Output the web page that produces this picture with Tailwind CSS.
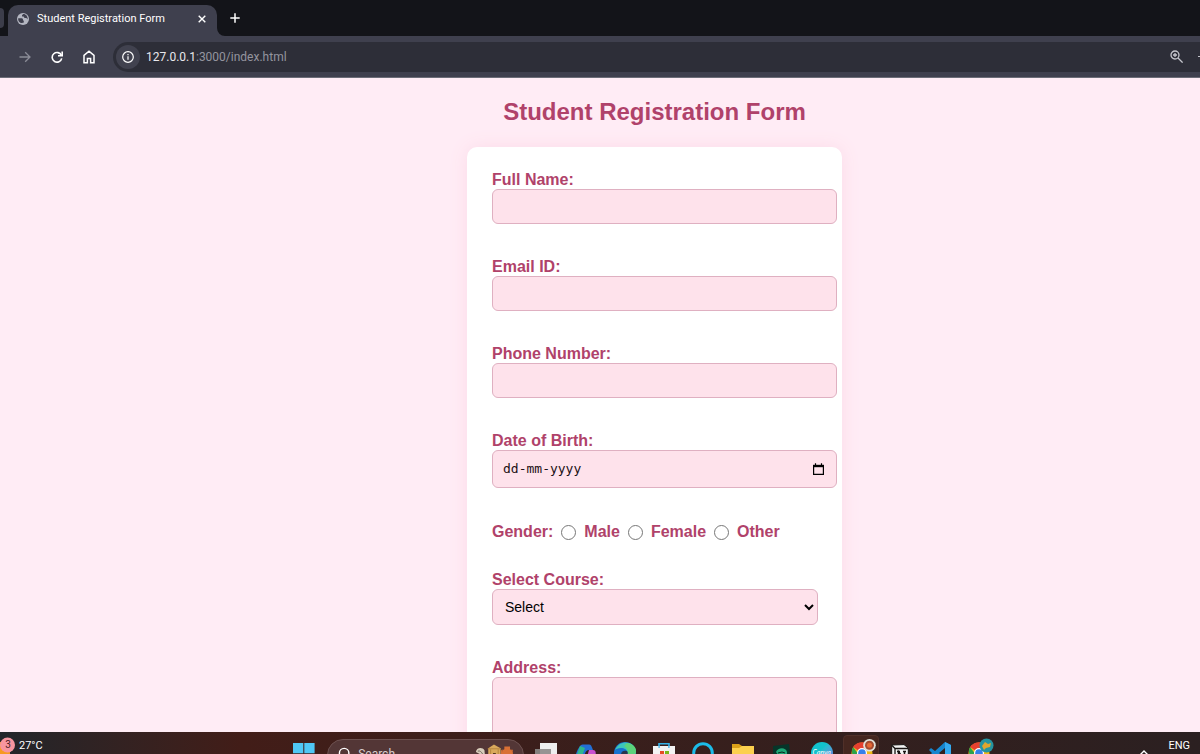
<!DOCTYPE html>
<html lang="en">
<head>
  <meta charset="UTF-8">
  <meta name="viewport" content="width=device-width, initial-scale=1.0">
  <title>Student Registration Form</title>
  <script src="https://cdn.jsdelivr.net/npm/@tailwindcss/browser@4"></script>
</head>
<body class="h-screen flex flex-col overflow-hidden bg-[#ffecf5] font-[Roboto,'Noto_Sans',sans-serif]">

  <!-- Tab strip -->
  <header class="shrink-0">
    <div class="h-9 flex bg-[#131419]">
      <div class="w-2 h-9 pt-2 pr-1">
        <div class="h-5 bg-[#3c3d4a] rounded-r-md"></div>
      </div>
      <div class="w-[209px] mt-[5px] pb-1 pl-[9px] pr-[7px] flex items-center gap-2 bg-[#3f404e] rounded-t-[10px] text-white">
        <svg class="size-3 shrink-0" viewBox="0 0 12 12" aria-hidden="true">
          <circle cx="6" cy="6" r="6" fill="#b4b6c1"/>
          <path d="M1.2 5.2h3.3c1 0 1.5.7 1.5 1.6 0 .7.8.6.8 1.4v1.4c-3 1.4-6-.8-5.6-4.4zM6.2 1.1 5 2.3v1.2h1.6l.9 1.6h1.9l1.2 1.3C11 3.5 8.8.9 6.2 1.1z" fill="#3f404e"/>
        </svg>
        <span class="flex-1 text-[11px] leading-4 whitespace-nowrap">Student Registration Form</span>
        <button aria-label="Close tab" class="size-4 grid place-items-center">
          <svg class="size-2" viewBox="0 0 8 8" stroke="#fff" stroke-width="1.4"><path d="M.7.7l6.6 6.6M7.3.7.7 7.3"/></svg>
        </button>
      </div>
      <div class="flex items-end">
        <svg class="size-2" viewBox="0 0 8 8"><path d="M0 0v8h8A8 8 0 0 1 0 0z" fill="#3f404e"/></svg>
      </div>
      <button aria-label="New tab" class="w-5 h-9 grid place-items-center">
        <svg class="size-[10px]" viewBox="0 0 10 10" stroke="#fff" stroke-width="1.5"><path d="M5 .3v9.4M.3 5h9.4"/></svg>
      </button>
    </div>

    <!-- Toolbar -->
    <div class="h-[42px] pl-[17px] flex items-center bg-[#3f404e] border-b border-[#6c6d78]">
      <nav class="flex gap-4">
        <button aria-label="Forward" class="size-4 grid place-items-center">
          <svg class="w-3 h-3" viewBox="0 0 12 12" fill="none" stroke="#8b8c97" stroke-width="1.3"><path d="M.5 6h10.5M6.2 1.2 11 6l-4.8 4.8"/></svg>
        </button>
        <button aria-label="Reload" class="size-4 grid place-items-center">
          <svg class="size-3" viewBox="0 0 12 12" fill="none" stroke="#fff" stroke-width="1.6"><path d="M10.4 4.4A4.8 4.8 0 1 0 10.7 7.3"/><path d="M7 4.8h4.2V.6"/></svg>
        </button>
        <button aria-label="Home" class="size-4 grid place-items-center">
          <svg class="w-3 h-[14px]" viewBox="0 0 12 14" fill="none" stroke="#fff" stroke-width="1.5"><path d="M1 5.3 6 1.2l5 4.1v7.5H7.6V8.5H4.4v4.3H1z"/></svg>
        </button>
      </nav>
      <div class="flex-1 h-[30px] ml-4 pl-[3px] flex items-center bg-[#2d2e38] rounded-l-full">
        <button aria-label="View site information" class="size-6 grid place-items-center rounded-full bg-[#41424f]">
          <svg class="size-3" viewBox="0 0 12 12" fill="none" stroke="#fff" stroke-width="1.2"><circle cx="6" cy="6" r="5.3"/><path d="M6 5.2v3.6M6 3v1.3"/></svg>
        </button>
        <p class="ml-[6px] flex-1 text-xs leading-5 text-[#94959f]"><span class="text-[#e8e8ec]">127.0.0.1</span>:3000/index.html</p>
        <button aria-label="Zoom" class="size-4 grid place-items-center">
          <svg class="size-[13px]" viewBox="0 0 13 13" fill="none" stroke="#c5c6cd" stroke-width="1.3"><circle cx="5" cy="5" r="4"/><path d="m8 8 4.6 4.6M5 3v4M3 5h4"/></svg>
        </button>
        <span class="w-[2px] h-px ml-[14px] bg-[#c5c6cd]"></span>
      </div>
    </div>
  </header>

  <!-- Page -->
  <main class="flex-1 min-h-0 overflow-hidden pl-[109px] pt-[18px] font-['Liberation_Sans',Arial,sans-serif] text-[#b0426a]">
    <h1 class="text-center text-2xl leading-8 font-bold mb-[19px]">Student Registration Form</h1>
    <form class="w-[375px] mx-auto p-6 pl-[25px] bg-white rounded-[10px] shadow-[0_0_18px_#fbdbe8] font-bold text-base leading-[18px]">
      <div class="mb-[34px]">
        <label for="name" class="block">Full Name:</label>
        <input id="name" type="text" class="block w-[345px] h-[35px] px-2 bg-[#fee2eb] border border-[#dfb0c1] rounded-md">
      </div>
      <div class="mb-[34px]">
        <label for="email" class="block">Email ID:</label>
        <input id="email" type="email" class="block w-[345px] h-[35px] px-2 bg-[#fee2eb] border border-[#dfb0c1] rounded-md">
      </div>
      <div class="mb-[34px]">
        <label for="phone" class="block">Phone Number:</label>
        <input id="phone" type="tel" class="block w-[345px] h-[35px] px-2 bg-[#fee2eb] border border-[#dfb0c1] rounded-md">
      </div>
      <div class="mb-[35px]">
        <label for="dob" class="block">Date of Birth:</label>
        <div class="flex items-center w-[345px] h-[38px] pl-[10px] pr-3 bg-[#fee2eb] border border-[#dfb0c1] rounded-md">
          <input id="dob" type="text" placeholder="dd-mm-yyyy" class="flex-1 font-['DejaVu_Sans_Mono',monospace] font-normal text-[13px] text-black placeholder:text-[#1c1015]">
          <button type="button" aria-label="Show date picker">
            <svg class="w-[11px] h-3" viewBox="0 0 11 12" fill="none" stroke="#000"><path d="M.6 2v9.4h9.8V2" stroke-width="1.2"/><path d="M0 3h11" stroke-width="2.4"/><path d="M2.5.3v2M8.5.3v2" stroke-width="1.2"/></svg>
          </button>
        </div>
      </div>
      <fieldset class="mb-[30px] flex items-center">
        <span class="mr-2">Gender:</span>
        <input id="male" type="radio" name="gender" class="size-[15px] mr-2"><label for="male" class="mr-2">Male</label>
        <input id="female" type="radio" name="gender" class="size-[15px] mr-2"><label for="female" class="mr-2">Female</label>
        <input id="other" type="radio" name="gender" class="size-[15px] mr-2"><label for="other">Other</label>
      </fieldset>
      <div class="mb-[34px]">
        <label for="course" class="block">Select Course:</label>
        <select id="course" class="block w-full h-9 px-2 bg-[#fee2eb] border border-[#dfb0c1] rounded-md font-normal text-sm text-black">
          <option>Select</option>
        </select>
      </div>
      <div>
        <label for="address" class="block">Address:</label>
        <textarea id="address" rows="4" class="block w-[345px] h-20 p-2 bg-[#fee2eb] border border-[#dfb0c1] rounded-md resize-none"></textarea>
      </div>
    </form>
  </main>

  <!-- Taskbar -->
  <footer class="shrink-0 h-[22px] overflow-hidden flex items-start bg-linear-to-r from-[#22252a] via-[#421d18] via-20% to-[#2b2021] text-white">
    <div class="w-[293px] flex items-start">
      <svg class="w-4 h-[22px]" viewBox="0 0 16 22" aria-hidden="true"><path d="M0 10h10v12H0z" fill="#f79a22"/><circle cx="7.5" cy="13" r="7.5" fill="#f6959f"/></svg>
      <span class="w-4 -ml-4 pt-[5px] text-center text-[10px] leading-4 text-[#4a1c24]">3</span>
      <span class="ml-[3px] pt-[6px] text-[11px] leading-4">27°C</span>
    </div>
    <button aria-label="Start" class="pt-[11px]">
      <svg class="w-[22px] h-[22px]" viewBox="0 0 22 22"><path d="M0 0h10.3v10.3H0zM11.3 0h10.3v10.3H11.3zM0 11.3h10.3V22H0zM11.3 11.3h10.3V22H11.3z" fill="#4fc7f5"/></svg>
    </button>
    <div class="w-[197px] h-8 mt-[7px] ml-3 px-[10px] pt-1 flex items-start bg-[#533636] border border-[#6d5150] rounded-full">
      <svg class="size-4 mt-[3px]" viewBox="0 0 16 16" fill="none" stroke="#fff" stroke-width="1.5"><circle cx="6.5" cy="6" r="5"/><path d="m10 10 5 5"/></svg>
      <input type="text" aria-label="Search" placeholder="Search" class="w-[117px] ml-[5px] text-xs leading-5 placeholder:text-[#d8cdcd]">
      <svg class="w-10 h-5" viewBox="0 0 40 20" aria-hidden="true">
        <path d="M1 8c0-5 7-6 9-2l1 12H8L7 11z" fill="#d9cdbb"/><path d="M3 7c2-1 4 1 5 3" stroke="#6d6258" fill="none"/>
        <path d="M14 4 20 0l7 4v14H14z" fill="#d9a95c"/><path d="M13.5 4.5h14M16.5 5v12M24.5 5v12" stroke="#b5843e"/><path d="M19 9h3v9h-3z" fill="#4e331b"/>
        <path d="M31 2h6v3c4 2 4 7 0 12h-6c-4-5-4-10 0-12z" fill="#d97035"/><path d="M30 6h-2v4M38 6h2v4" stroke="#d97035" fill="none"/>
      </svg>
    </div>
    <nav class="w-[473px] ml-[2px] grid grid-cols-12 justify-items-center items-start">
      <button aria-label="Task view" class="pt-[11px]"><svg class="size-[22px]" viewBox="0 0 22 22"><path d="M5 0h17v16H5z" fill="#eee"/><path d="M0 6h16v14H0z" fill="#8d8988" fill-opacity=".9"/></svg></button>
      <button aria-label="Copilot" class="pt-3"><svg class="size-[22px]" viewBox="0 0 22 22"><path d="M6 2C7 .8 8 .5 10 .5h5c2 0 2.500 1.500 3 3L19 6h-4c-3 0-4 3-5 7l-2 7H1C0 13 3 6 6 2z" fill="#236fd6"/><path d="M6 2 2 13l5 2L11 4z" fill="#2eb58e"/><path d="M15 6h4c3 0 3 3 2.500 6L19 20h-8z" fill="#c850cf"/></svg></button>
      <button aria-label="Edge" class="pt-[10px]"><svg class="size-[22px]" viewBox="0 0 22 22"><circle cx="11" cy="11" r="11" fill="#1672d0"/><path d="M1 8C5-2 20-2 22 9c0 4-3 6-6 6-2 0-3-1-3-2 2-4-2-7-6-7-3 0-5 1-6 2z" fill="#3cc5ba"/><path d="M13 1c6 1 9 4 9 8 0 4-3 6-6 6-2 0-3-1-3-2 2-4 0-7-3-9z" fill="#5bd37a"/><path d="M7 13c0-4 3-5 6-4 1 1 1 3 0 4 0 1 1 2 3 2-4 4-9 2-9-2z" fill="#28364d"/></svg></button>
      <button aria-label="Store" class="pt-[10px]"><svg class="size-[22px]" viewBox="0 0 22 22"><path d="M6 6V1.7h10V6" fill="none" stroke="#36b2e8" stroke-width="1.6"/><path d="M0 4h22v17H0z" fill="#f3f3f3"/><path d="M5.5 4h1.2v2H5.5zM15.3 4h1.2v2h-1.2z" fill="#36b2e8"/><path d="M7 9h4v4H7z" fill="#e64a25"/><path d="M12 9h4v4h-4z" fill="#79b81a"/></svg></button>
      <button aria-label="Assistant" class="pt-[10px]"><svg class="size-[22px]" viewBox="0 0 22 22"><circle cx="11" cy="11" r="9.3" fill="none" stroke="#1cbce9" stroke-width="3"/></svg></button>
      <button aria-label="File Explorer" class="pt-3"><svg class="size-[22px]" viewBox="0 0 22 22"><path d="M0 0h7l3 2h12v5H0z" fill="#dba019"/><path d="M0 4h7l3-2h12v18H0z" fill="#fcd04e"/></svg></button>
      <button aria-label="Green app" class="pt-3"><svg class="size-[18px]" viewBox="0 0 18 18"><path d="M0 2 16 0l2 18H0z" fill="#063529"/><path d="M3 8c2-5 10-5 11 0v6h-3l1-3-3 1-2 4-2-5z" fill="#1fa675"/><path d="m5 9 4-1 3 1" stroke="#06271e" fill="none"/></svg></button>
      <button aria-label="Canva" class="pt-[10px]">
        <span class="size-[22px] pt-[6px] block rounded-full overflow-hidden bg-linear-to-br from-[#12c2cc] from-40% to-[#6465e5] font-[Lato,sans-serif] italic text-[7px] leading-[8px] text-white text-center">Canva</span>
      </button>
      <button aria-label="Chrome" class="w-9 h-8 mt-[3px] pt-[3px] pl-[7px] flex items-start bg-[#45261f] border border-[#503029] rounded-sm">
        <svg class="w-[26px] h-[24px]" viewBox="0 0 26 24"><circle cx="11" cy="14" r="10.5" fill="#efb916"/><path d="M11 14 2 8C6 2 16 1 20 9z" fill="#e7402f"/><path d="M2 8c-3 6 1 15 9 15.500L8 16z" fill="#2ba24c"/><circle cx="11" cy="14" r="5" fill="#fff"/><circle cx="11" cy="14" r="3.8" fill="#3680ea"/><circle cx="18.5" cy="6.3" r="6.3" fill="#e1e2da"/><circle cx="18.5" cy="6.3" r="4.5" fill="#a44b30"/><circle cx="18.5" cy="6.3" r="2.5" fill="#e66835"/></svg>
      </button>
      <button aria-label="Notion" class="pt-3"><svg class="w-[18px] h-5" viewBox="0 0 18 20"><path d="M.7 1 13 .6 17.300 4v15H4L.7 15z" fill="#f4f4f4" stroke="#171312"/><path d="M1 1.500 4 4.500h13M4 4.500V19" fill="none" stroke="#171312" stroke-width="1.3"/><path d="M7.500 16V7.500l6 8.500V7.500M6 7.500h3M12 7.500h3" fill="none" stroke="#171312" stroke-width="1.5"/></svg></button>
      <button aria-label="VS Code" class="pt-[10px]"><svg class="size-[22px]" viewBox="0 0 22 22"><path d="m16 0 6 3v16l-6 3L6 13l-4 3-2-2 3-3-3-3 2-2 4 3zm0 6-6 5 6 5z" fill="#1686cf"/><path d="m16 0 6 3v16l-6 3z" fill="#35aaf0"/></svg></button>
      <button aria-label="Chrome profile" class="pt-[6px] pl-1">
        <svg class="w-[26px] h-[24px]" viewBox="0 0 26 24"><circle cx="11" cy="15" r="10.5" fill="#efb916"/><path d="M11 15 2 9C6 3 16 2 20 10z" fill="#e7402f"/><path d="M2 9c-3 6 1 14 9 14.500L8 17z" fill="#2ba24c"/><circle cx="11" cy="15" r="5" fill="#fff"/><circle cx="11" cy="15" r="3.8" fill="#3680ea"/><circle cx="18.5" cy="7.5" r="7" fill="#2494a0"/><path d="m14 8 3-4 3 2 3-1-1 4-4 1-2 2z" fill="#e0a52c"/></svg>
      </button>
    </nav>
    <div class="ml-auto pr-[10px] flex items-start gap-5">
      <button aria-label="Show hidden icons" class="pt-[18px]"><svg class="w-2 h-[5px]" viewBox="0 0 8 5" fill="none" stroke="#fff" stroke-width="1.4"><path d="m.5 4.5 3.5-3.5 3.5 3.5"/></svg></button>
      <span class="pt-[6px] text-[11px] leading-4">ENG</span>
    </div>
  </footer>
</body>
</html>
